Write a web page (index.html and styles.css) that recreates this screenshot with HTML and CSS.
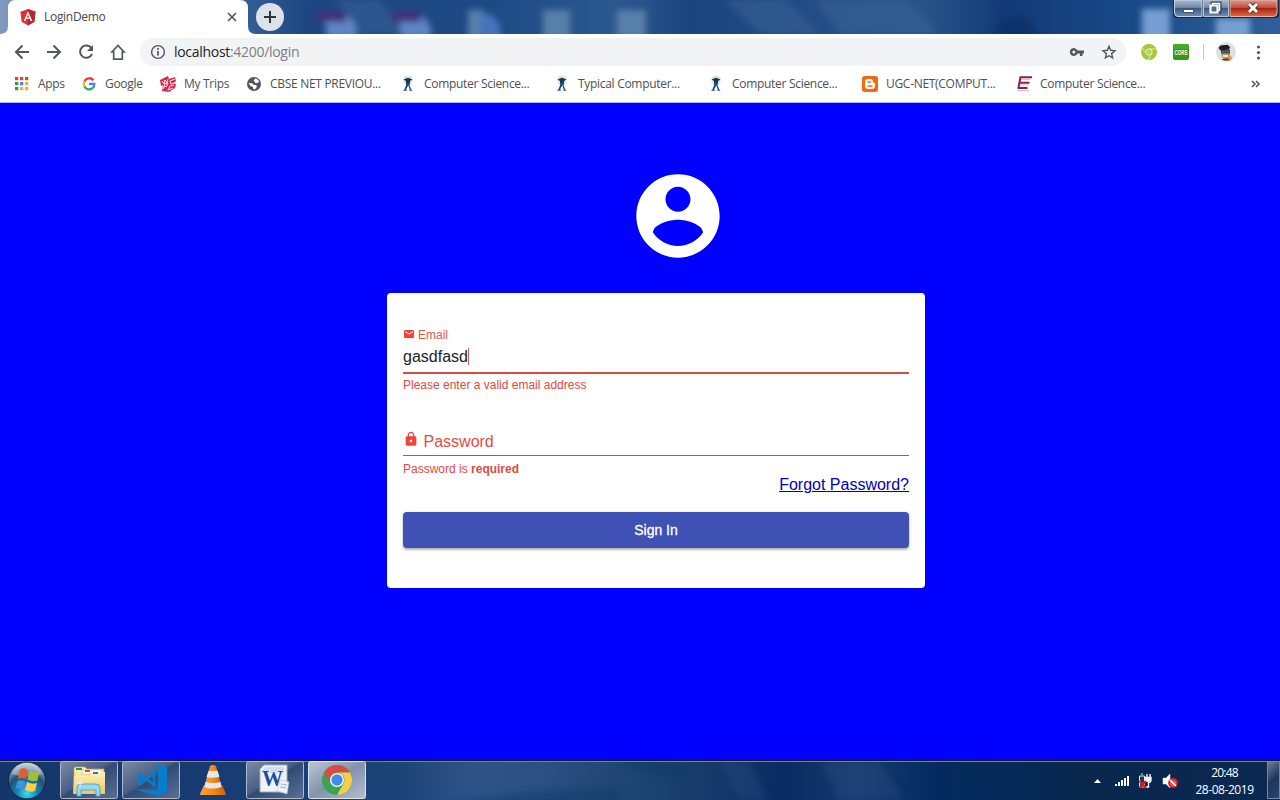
FILE: index.html
```html
<!DOCTYPE html>
<html lang="en">
<head>
<meta charset="utf-8">
<title>LoginDemo</title>
<link rel="stylesheet" href="styles.css">
</head>
<body>
<svg class="defs" width="0" height="0">
  <defs>
    <symbol id="scholar" viewBox="0 0 16 16"><rect x="3.500" y="0" width="9" height="8" rx="3" fill="#cfe3f0"/><path d="M3.500 3.500 8 1.700l4.500 1.800L10 5v2H6V5z" fill="#2a3138"/><path d="M6.500 6.500h3l.8 2h-1l2 5.200h.9v1H9.500v-1h.3L8.300 9.300 6 13.700h.8v1H3.500v-1h.8l2-5.200H5.700z" fill="#17498c"/></symbol>
  </defs>
</svg>
<header class="titlebar">
  <svg class="glass" width="1280" height="34" viewBox="0 0 1280 34">
    <defs>
      <linearGradient id="sky"><stop offset="0" stop-color="#7f98bd"/><stop offset=".2" stop-color="#315b91"/><stop offset=".24" stop-color="#1d4683"/><stop offset=".38" stop-color="#1d4a85"/><stop offset=".48" stop-color="#2c5890"/><stop offset=".54" stop-color="#1c4580"/><stop offset=".72" stop-color="#285489"/><stop offset=".785" stop-color="#123a77"/><stop offset=".87" stop-color="#174785"/><stop offset="1" stop-color="#315f99"/></linearGradient>
      <filter id="soft" x="-30%" y="-30%" width="160%" height="160%"><feGaussianBlur stdDeviation="3"/></filter>
    </defs>
    <rect width="1280" height="34" fill="url(#sky)"/>
    <g filter="url(#soft)">
      <path d="M335 0h45l25 34h-45zM725 0h60l35 34h-60zM815 0h90l35 34h-100z" fill="#386398" opacity=".55"/>
      <path d="M324 12q35-3 33 26h-30zM398 12q35-3 33 26h-30z" fill="#5e84c5"/>
      <path d="M316 11h30v11h-30zM391 11h30v11h-30z" fill="#43307a"/>
      <path d="M468 10h16v30h-16zM543 10h27v30h-27zM617 10h29v30h-29z" fill="#587fa8"/>
      <path d="M480 14q22-2 21 26h-21z" fill="#4673bd"/>
      <path d="M1003 18h25l10 22h-45z" fill="#07306b"/>
      <path d="M1142 9h28v31h-28zM1216 18h34v22h-34z" fill="#769fd2"/>
    </g>
  </svg>
  <svg class="tab-shape" width="264" height="34" viewBox="0 0 264 34"><path d="M0 34q8 0 8-8V8q0-8 8-8h224q8 0 8 8v18q0 8 8 8z" fill="#fff"/></svg>
  <div class="tab">
    <svg width="16" height="17" viewBox="0 0 16 17"><path d="M8 0 .5 2.800l1.100 10L8 16.500l6.400-3.700 1.100-10z" fill="#dd3136"/><path d="M8 0v16.500l6.400-3.700 1.100-10z" fill="#bd2431"/><path d="M8 2.300 3.700 12h1.700l.9-2.200h3.500l.8 2.200h1.700zm0 3.200L9.200 8.400H6.900z" fill="#fff"/></svg>
    <span class="tab-title">LoginDemo</span>
    <svg class="tab-close" width="10" height="10" viewBox="0 0 10 10"><path d="m1 1 8 8M9 1 1 9" stroke="#54575b" stroke-width="1.700"/></svg>
  </div>
  <span class="new-tab"><svg width="14" height="14" viewBox="0 0 14 14"><path d="M7 1v12M1 7h12" stroke="#303236" stroke-width="2"/></svg></span>
  <svg class="controls" width="106" height="19" viewBox="0 0 106 19">
    <defs>
      <linearGradient id="ctl" x2="0" y2="1"><stop stop-color="#aabbd1"/><stop offset=".45" stop-color="#7188a8"/><stop offset=".5" stop-color="#39587f"/><stop offset="1" stop-color="#718fb4"/></linearGradient>
      <linearGradient id="ctlred" x2="0" y2="1"><stop stop-color="#d69b91"/><stop offset=".45" stop-color="#c3503f"/><stop offset=".5" stop-color="#a82112"/><stop offset="1" stop-color="#dc6c43"/></linearGradient>
    </defs>
    <path d="M0 0v14q0 4 4 4h98q4 0 4-4V0z" fill="#172642"/>
    <path d="M1.500 0v13q0 3.500 3.500 3.500h24V0z" fill="url(#ctl)" stroke="#cbd6e5"/>
    <path d="M30.500 0h25v16.500h-25z" fill="url(#ctl)" stroke="#b4c3d6"/>
    <path d="M57 0h47v13q0 3.500-3.500 3.500H57z" fill="url(#ctlred)" stroke="#e6b5aa"/>
    <path d="M10.500 9.500h10v3h-10z" fill="#fff" stroke="#46566d"/>
    <path d="M39.500 3.500h7v8h-7z" fill="none" stroke="#34435a" stroke-width="4"/><path d="M39.500 3.500h7v7h-7z" fill="none" stroke="#fff" stroke-width="1.500"/>
    <path d="M37.500 5.500h7v7h-7z" fill="#526985" stroke="#fff" stroke-width="2.200"/>
    <path d="m76 4 8 8m0-8-8 8" stroke="#612a2c" stroke-width="4.800"/><path d="m76 4 8 8m0-8-8 8" stroke="#fff" stroke-width="3"/>
  </svg>
</header>

<nav class="toolbar">
  <svg width="130" height="32" viewBox="0 0 130 32" fill="none" stroke="#54575b" stroke-width="2">
    <path d="M29 16H16m6.500-6.500L16 16l6.500 6.500M47 16h13m-6.500-6.500L60 16l-6.500 6.500"/>
    <path d="M91.500 12.300A6.200 6.200 0 1 0 92 18"/><path d="M93 9v6h-6z" fill="#54575b" stroke="none"/>
    <path d="M112 16h1.700v7.200h8.600V16h1.700l-6-6.500z" stroke-width="1.700"/>
  </svg>
  <div class="omnibox">
    <svg width="16" height="16" viewBox="0 0 16 16"><circle cx="8" cy="8" r="6.400" fill="none" stroke="#54575b" stroke-width="1.400"/><path d="M8 7v4.500M8 4v1.700" stroke="#54575b" stroke-width="1.700"/></svg>
    <span class="url"><b>localhost</b>:4200/login</span>
    <svg class="key" width="16" height="16" viewBox="0 0 16 16"><path d="M8.500 6.600a4 4 0 1 0 0 2.800h2.400V12h2.600V9.400H15V6.600z" fill="#54575b"/><circle cx="4.800" cy="8" r="1.500" fill="#f1f3f4"/></svg>
    <svg width="16" height="16" viewBox="0 0 16 16"><path d="m8 2.300 1.600 4 4.400.4-3.400 2.900 1 4.300L8 11.700l-3.600 2.200 1-4.300L2 6.700l4.400-.4z" fill="none" stroke="#54575b" stroke-width="1.400"/></svg>
  </div>
  <svg class="extensions" width="154" height="32" viewBox="1126 36 154 32">
    <circle cx="1149" cy="52" r="8" fill="#a3ca36"/><circle cx="1149" cy="52" r="3.200" fill="#b5d653" stroke="#e7f2b9"/><path d="M1142 48l4 5M1149 49h7M1152 53l-4 7" stroke="#e0edab" fill="none"/>
    <rect x="1173" y="44" width="16" height="16" rx="2" fill="#379719"/><path d="M1173 46q0-2 2-2h12q2 0 2 2v3h-16z" fill="#45aa26"/>
    <text x="1174.500" y="55.200" class="cors" textLength="13" lengthAdjust="spacingAndGlyphs">CORS</text>
    <path d="M1203.500 44v16" stroke="#c5c8ca"/>
    <circle cx="1226" cy="52" r="10" fill="#dedfe1"/><path d="M1221 49h9v7q-1 4-4.500 4-4.500-2-4.500-7z" fill="#c39160"/><path d="m1218.500 48 2-2.500 7-.8 2.500 2.300-1 2.500-8.500 1z" fill="#171d20"/><path d="M1221.500 50.500h3.500v2.500h-3.500zm4.500 0h3.500v2.500H1226z" fill="#536b8a" stroke="#242629" stroke-width=".7"/><path d="M1223 56h5" stroke="#fff" stroke-width="1.500"/><path d="m1221.500 59 2.500 1.500h6l-1-2z" fill="#443228"/><path d="m1228 57 3-1 1 3-3 2z" fill="#d99d2e"/>
    <g fill="#54575b"><circle cx="1258.500" cy="47" r="1.600"/><circle cx="1258.500" cy="52.500" r="1.600"/><circle cx="1258.500" cy="58" r="1.600"/></g>
  </svg>
</nav>

<nav class="bookmarks">
  <a class="bm apps"><svg viewBox="0 0 16 16"><path d="M1 1h3.300v3.300H1zM6 1h3.300v3.300H6zM11 1h3.300v3.300H11z" fill="#dc4437"/><path d="M1 6h3.300v3.300H1z" fill="#35975c"/><path d="M6 6h3.300v3.300H6z" fill="#4285f4"/><path d="M11 6h3.300v3.300H11z" fill="#e9b336"/><path d="M1 11h3.300v3.300H1z" fill="#35975c"/><path d="M6 11h3.300v3.300H6zM11 11h3.300v3.300H11z" fill="#e9b336"/></svg><span>Apps</span></a>
  <a class="bm google"><svg viewBox="0 0 16 16" fill="none" stroke-width="2.300"><path d="M12.400 4.200A5.300 5.300 0 0 0 3.400 5.500" stroke="#ea4335"/><path d="M3.400 5.500a5.300 5.300 0 0 0 0 5" stroke="#fbbc05"/><path d="M3.400 10.500a5.300 5.300 0 0 0 8.200 1.600" stroke="#34a853"/><path d="M11.600 12.100q1.900-1.600 1.700-4.200H8" stroke="#4285f4"/></svg><span>Google</span></a>
  <a class="bm trips"><svg viewBox="0 0 16 16"><path d="m0 4 8-4 1 3 6-2 1 4-2 2 2 1-1 4-6 4-7-1 1-6-2 1z" fill="#d6294f"/><path d="m2 5 2 3 1-4 2 3 1-4M15 3l-5 2 1 3 4-1M3 13l2-5 3-1-1 3-3 1M14 9l-4 1-2 4 5-2" fill="none" stroke="#fff" stroke-width=".9"/></svg><span>My Trips</span></a>
  <a class="bm wide"><svg viewBox="0 0 16 16"><circle cx="8" cy="8" r="7" fill="#54575b"/><path d="M9 2.500c2 0 3.400 1.400 4 3L11.500 7H9V5.500L7.500 5zM2.500 7l4 .5L8 9h2l1 1.500-2 3-2-.5v-2L4.500 10z" fill="#fff"/></svg><span>CBSE NET PREVIOU...</span></a>
  <a class="bm wide"><svg><use href="#scholar"/></svg><span>Computer Science...</span></a>
  <a class="bm wide"><svg><use href="#scholar"/></svg><span>Typical Computer...</span></a>
  <a class="bm wide"><svg><use href="#scholar"/></svg><span>Computer Science...</span></a>
  <a class="bm wide"><svg viewBox="0 0 16 16"><rect width="16" height="16" rx="2.500" fill="#ef6c12"/><path d="M6 3h2.500Q11 3 11 6q0 1 1 1 1 0 1 1v1.500q0 3.500-3.500 3.500h-3Q3 13 3 9.500V6q0-3 3-3z" fill="#fff"/><path d="M6 6h2.500M6 9.900h4" stroke="#ef6c12" stroke-width="1.500" stroke-linecap="round"/></svg><span>UGC-NET(COMPUT...</span></a>
  <a class="bm wide"><svg viewBox="0 0 16 16"><path d="M3.500 1.300H16M2.500 6.700h11M1.500 12h10M4.500 1 2.300 12.800" stroke="#892052" stroke-width="2" fill="none"/><path d="M5 3.300h9.500M4 9h9M1 14.700h12" stroke="#c8bbc5"/></svg><span>Computer Science...</span></a>
  <svg class="more" width="10" height="8" viewBox="0 0 10 8"><path d="m1 1 3 3-3 3m4-6 3 3-3 3" fill="none" stroke="#54575b" stroke-width="1.600"/></svg>
</nav>

<main class="page">
  <svg class="avatar" viewBox="0 0 24 24" fill="#fff"><path d="M12 2C6.480 2 2 6.480 2 12s4.480 10 10 10 10-4.480 10-10S17.520 2 12 2zm0 3c1.660 0 3 1.340 3 3s-1.340 3-3 3-3-1.340-3-3 1.340-3 3-3zm0 14.200c-2.500 0-4.710-1.280-6-3.220.03-1.990 4-3.080 6-3.080 1.990 0 5.970 1.090 6 3.080-1.290 1.940-3.500 3.220-6 3.220z"/></svg>
  <form class="card">
    <label class="email-label"><svg width="12" height="12" viewBox="0 0 24 24"><path d="M20 4H4c-1.100 0-2 .9-2 2v12c0 1.100.9 2 2 2h16c1.100 0 2-.9 2-2V6c0-1.100-.9-2-2-2zm0 4-8 5-8-5V6l8 5 8-5z" fill="#f44336"/></svg><span>Email</span></label>
    <div class="email-value">gasdfasd<i class="caret"></i></div>
    <p class="error">Please enter a valid email address</p>
    <label class="password-label"><svg width="16" height="16" viewBox="0 0 24 24"><path d="M18 8h-1V6c0-2.760-2.240-5-5-5S7 3.240 7 6v2H6c-1.100 0-2 .9-2 2v10c0 1.100.9 2 2 2h12c1.100 0 2-.9 2-2V10c0-1.100-.9-2-2-2zm-6 9c-1.100 0-2-.9-2-2s.9-2 2-2 2 .9 2 2-.9 2-2 2zm3.100-9H8.900V6c0-1.710 1.390-3.100 3.100-3.100s3.100 1.390 3.100 3.100z" fill="#f44336"/></svg><span>Password</span></label>
    <p class="error password-error">Password is <b>required</b></p>
    <a class="forgot">Forgot Password?</a>
    <button class="sign-in" type="button">Sign In</button>
  </form>
</main>

<footer class="taskbar">
  <svg class="task-glass" width="1280" height="40" viewBox="0 0 1280 40">
    <defs>
      <linearGradient id="taskbg"><stop stop-color="#14376b"/><stop offset=".15" stop-color="#173b70"/><stop offset=".31" stop-color="#1c4378"/><stop offset=".37" stop-color="#2e5388"/><stop offset=".42" stop-color="#2b5086"/><stop offset=".5" stop-color="#1d4471"/><stop offset=".56" stop-color="#15396a"/><stop offset=".61" stop-color="#082b63"/><stop offset=".67" stop-color="#153a6d"/><stop offset=".73" stop-color="#042b61"/><stop offset=".85" stop-color="#08274d"/><stop offset="1" stop-color="#0b2851"/></linearGradient>
      <linearGradient id="btn" x2="1" y2="1"><stop stop-color="#7d8ba7"/><stop offset=".45" stop-color="#485f84"/><stop offset=".5" stop-color="#304b76"/><stop offset="1" stop-color="#5c7193"/></linearGradient>
      <linearGradient id="btnhot" x2="1" y2="1"><stop stop-color="#bdc7d6"/><stop offset=".5" stop-color="#8293ad"/><stop offset="1" stop-color="#b4becd"/></linearGradient>
    </defs>
    <rect width="1280" height="40" fill="url(#taskbg)"/>
    <path d="M720 1h28l20 39h-30zM820 1h60l24 39h-66z" fill="#30528a" opacity=".3" filter="url(#soft)"/>
    <path d="M430 48q90-20 190-20v20zM610 1h80v20z" fill="#0b3b65" opacity=".5" filter="url(#soft)"/>
    <path d="M0 .5h1280" stroke="#111b33"/><path d="M0 1.500h1280" stroke="#7184a3"/>
  </svg>
  <div class="tasks">
    <svg width="380" height="40" viewBox="0 760 380 40">
      <defs>
        <radialGradient id="orb" cx=".5" cy=".85" r=".8"><stop stop-color="#40dcf4"/><stop offset=".35" stop-color="#1681ae"/><stop offset=".65" stop-color="#254f77"/><stop offset="1" stop-color="#a9bfcd"/></radialGradient>
        <linearGradient id="folder" x2="0" y2="1"><stop stop-color="#fff2b6"/><stop offset="1" stop-color="#eac66d"/></linearGradient>
        <linearGradient id="cone"><stop stop-color="#f9a33d"/><stop offset=".5" stop-color="#f28a17"/><stop offset="1" stop-color="#cf620c"/></linearGradient>
      </defs>
      <circle cx="27" cy="780.500" r="18.500" fill="url(#orb)" stroke="#0a2447"/>
      <path d="M12 774q4-11 15-11t15 11q-14 5-30 0z" fill="#fff" opacity=".32"/>
      <path d="M20 769q5-2 8 1l-2 9q-4-2-8 0z" fill="#ec592b"/><path d="M29.500 770.500q5 3 10 1l-2 9q-5 2-10-1z" fill="#99c13c"/><path d="M17.500 781q4-2 8 1l-2 8q-4-3-8-1z" fill="#3b94df"/><path d="M27 782q5 3 10 1l-2 8q-5 2-10-1z" fill="#ffd14b"/>
      <g stroke="#aeb8c9"><rect x="60.500" y="761.500" width="57" height="37" rx="2" fill="url(#btn)"/><rect x="122.500" y="761.500" width="57" height="37" rx="2" fill="url(#btn)"/><rect x="246.500" y="761.500" width="57" height="37" rx="2" fill="url(#btn)"/><rect x="308.500" y="761.500" width="57" height="37" rx="2" fill="url(#btnhot)" stroke="#dde3ed"/></g>
      <path d="M74 769q0-2 2-2h9l2 2h17v24H74z" fill="url(#folder)" stroke="#c9a44c" stroke-width=".7"/><path d="M76 768h6v2h-6z" fill="#27963a"/><path d="M82 770h20v4H82z" fill="#fff" stroke="#cdae62" stroke-width=".5"/><path d="M85 770h5v2h-5z" fill="#ca4e37"/><path d="M74 776h16l2-4h13v22H73z" fill="url(#folder)"/><path d="M93 772h5v2h-5z" fill="#277ac0"/>
      <path d="M77 796v-8q0-4 4-4h15q4 0 4 4v8h-4v-6H81v6z" fill="#98d8ef" stroke="#53a5c9"/><path d="M80 779v8m-4-4h8" stroke="#fff" opacity=".8"/>
      <path d="m158 764 9 3v25l-9 4-24-7 24 1z" fill="#087dcc"/><path d="m138 776 2-2 14 11v-13l-14 12-2-2 3-3z" fill="none" stroke="#087dcc" stroke-width="2.600"/>
      <path d="m204 785-4 9q0 1 1 1h24q1 0 1-1l-4-9z" fill="url(#cone)"/><path d="m210 766 2-1h2l2 1 6 22q-9 5-18 0z" fill="url(#cone)"/><path d="m208.500 771 9-.2 2 6q-6 2-13 .2zM205.500 782q7 2 15 0l1 5q-9 3-17 0z" fill="#e5e7e8"/>
      <path d="m260 769 4-4h23v26l-3 1h-24z" fill="#eef3f8" stroke="#9badc5"/><path d="m262 770 4-3h18v6h-22z" fill="#cfdfef"/><text x="262" y="786" class="word" textLength="21" lengthAdjust="spacingAndGlyphs">W</text><path d="m280 780 9 2-2 12-10-3z" fill="#edf4fb" stroke="#a9bed5" stroke-width=".6"/><path d="m281 784 6 1m-7 2 6 1" stroke="#9fb4ce"/>
      <circle cx="337" cy="780" r="15" fill="#39a456"/><path d="M324 772.500A15 15 0 0 1 350 772.500H337a7.500 7.500 0 0 0-6.500 11.200z" fill="#d94b3f"/><path d="M350 772.500A15 15 0 0 1 337 795l6.500-11.300a7.500 7.500 0 0 0-6.500-11.200z" fill="#f5ce47"/><circle cx="337" cy="780" r="7" fill="#fff"/><circle cx="337" cy="780" r="5.700" fill="#438bea"/>
    </svg>
  </div>
  <svg class="tray" width="90" height="40" viewBox="1090 760 90 40">
    <path d="m1094 783 3.500-4 3.500 4z" fill="#fff"/>
    <path d="M1115 784h2v2h-2zM1118 782h2v4h-2zM1121 780h2v6h-2zM1124 778h2v8h-2zM1127 776h2v10h-2z" fill="#fff"/>
    <path d="M1139.500 776h5v11h-5zM1141 774h2" fill="#26364c" stroke="#e5e9ee"/><path d="M1145 777.500h6v2.500q0 2.500-2.500 2.500v4.500h-3M1147 774v4m3-4v4" fill="none" stroke="#fff" stroke-width="1.300"/><path d="M1145 778h6v2l-2 2h-4z" fill="#fff"/><path d="m1139.500 781 6.500 7m0-7-6.500 7" stroke="#e11720" stroke-width="2.500"/>
    <path d="M1163 778h3l4-4v14l-4-4h-3z" fill="#fff" stroke="#dbe1e9" stroke-width=".5"/><circle cx="1173" cy="783" r="4" fill="#c9605d" stroke="#e51f24" stroke-width="1.800"/><path d="m1170 780 6 6" stroke="#fff" stroke-width="1.500"/>
  </svg>
  <div class="clock"><span class="time">20:48</span><span class="date">28-08-2019</span></div>
  <span class="show-desktop"></span>
</footer>
</body>
</html>
```
FILE: styles.css
```css
* { box-sizing: border-box; }
body { margin: 0; width: 1280px; height: 800px; overflow: hidden; display: flex; flex-direction: column; background: #fff; font-family: "Liberation Sans", Arial, sans-serif; }
svg { display: block; flex: none; }
.defs { position: absolute; }
.titlebar { height: 34px; position: relative; display: flex; flex: none; align-items: flex-start; }
.glass, .task-glass { position: absolute; inset: 0; }
.tab-shape { position: absolute; left: 0; top: 0; }
.tab { position: relative; width: 248px; height: 34px; padding: 0 11px 0 20px; display: flex; align-items: center; }
.tab-title { margin-left: 8px; font: 12px/16px "Open Sans", sans-serif; letter-spacing: -.3px; color: #45484c; }
.tab-close { margin-left: auto; }
.new-tab { position: relative; margin: 3px 0 0 8px; width: 28px; height: 28px; border-radius: 50%; background: #dce2ea; display: grid; place-items: center; }
.controls { position: relative; margin-left: auto; right: 1px; }
.toolbar { height: 36px; padding: 2px 0; flex: none; display: flex; align-items: center; }
.toolbar > svg:first-child { margin-right: 10px; }
.omnibox { width: 986px; height: 28px; border-radius: 14px; background: #f1f3f4; padding: 0 9px 0 10px; display: flex; align-items: center; }
.url { margin-left: 8px; font: 14px/20px "Open Sans", sans-serif; letter-spacing: -.3px; color: #7b7e82; }
.url b { font-weight: 400; color: #202124; }
.key { margin: 0 16px 0 auto; }
.extensions { flex: none; }
.cors { font: bold 8px "Liberation Sans", sans-serif; fill: #fff; }
.word { font: bold 24px "Liberation Serif", serif; fill: #1a4f9d; }
.bookmarks { height: 33px; flex: none; padding: 0 19px 5px 14px; display: flex; align-items: center; border-bottom: 1px solid #b0b0ff; }
.bm { display: flex; align-items: center; gap: 8px; font: 12px/18px "Open Sans", sans-serif; color: #4c4f53; letter-spacing: -.3px; white-space: nowrap; }
.bm svg { width: 16px; height: 16px; }
.apps { width: 67px; }
.google { width: 79px; }
.trips { width: 86px; }
.wide { width: 154px; }
.more { margin-left: auto; }
.page { height: 657px; flex: none; background: #00f; display: flex; flex-direction: column; padding: 63px 0 0 387px; }
.avatar { width: 100px; height: 100px; margin-left: 241px; }
.card { width: 538px; height: 295px; margin-top: 27px; border-radius: 4px; padding: 34px 16px 0; background: #fff; display: flex; flex-direction: column; }
.email-label { height: 16px; display: flex; align-items: flex-start; gap: 3px; font-size: 12px; line-height: 17px; color: #e9564b; }
.email-label svg { margin-top: 1px; }
.email-value { height: 31px; border-bottom: 2px solid #d84d43; font-size: 16px; line-height: 28px; color: #222; display: flex; align-items: flex-start; }
.caret { width: 1px; height: 17px; margin-top: 5px; background: #d75c53; }
.error { margin: 4px 0 0; height: 14px; font-size: 12px; line-height: 14px; color: #df493f; }
.password-label { height: 25px; margin-top: 39px; border-bottom: 1px solid #b95148; display: flex; align-items: flex-start; gap: 4.5px; font-size: 16px; line-height: 22px; color: #e44b40; }
.password-error { margin-top: 6px; }
.forgot { align-self: flex-end; font-size: 16px; line-height: 18px; color: #0000ba; text-decoration: underline; }
.sign-in { height: 36px; flex: none; margin-top: 18px; padding: 0; border: 0; border-radius: 4px; background: #3f51b5; color: #fff; font: 500 14px/36px "Liberation Sans", sans-serif; -webkit-text-stroke: .3px #fff; box-shadow: 0 2px 2px rgba(0,0,0,.22), 0 1px 4px rgba(0,0,0,.15); }
.taskbar { height: 40px; flex: none; position: relative; display: flex; }
.tasks, .tray, .clock, .show-desktop { position: relative; }
.tasks { width: 1090px; }
.clock { width: 86px; padding: 5px 0 0 3px; display: flex; flex-direction: column; align-items: center; font: 12px/16px "Open Sans", sans-serif; color: #fff; letter-spacing: -.45px; }
.clock span { height: 17px; }
.time { letter-spacing: -.8px; }
.show-desktop { width: 13px; height: 38px; margin: 1px 0 0 auto; border: 1px solid #7386a3; background: linear-gradient(135deg, #6e7d99, #1e375c 50%, #2b466b); }
```
